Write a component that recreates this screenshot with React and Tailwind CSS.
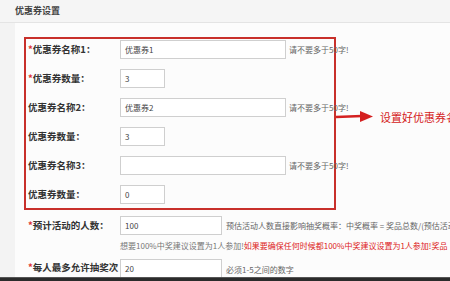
const font = { fontFamily: '"Noto Sans CJK SC", "Noto Sans", sans-serif' };

function Field({ label, required, value, width, hint }) {
  return (
    <div className="flex items-center h-[19px] whitespace-nowrap">
      <div className="w-[92px] shrink-0 text-[9.5px] font-bold text-[#333] leading-none">
        {required && <span className="text-[#d33]">*</span>}
        {label}
      </div>
      <div
        className={`${width} shrink-0 h-[19px] border border-[#cfcfcf] bg-white flex items-center pl-[4px] text-[8px] text-[#444]`}
      >
        {value}
      </div>
      {hint && <span className="ml-[3px] text-[8px] text-[#666]">{hint}</span>}
    </div>
  );
}

export default function App() {
  return (
    <div
      className="relative w-[450px] h-[281px] overflow-hidden bg-[#f3f3f3] flex flex-col"
      style={font}
    >
      <div className="h-[23px] shrink-0 pl-[15px] flex items-center text-[9px] font-bold text-[#444] border-b border-[#e4e4e4] bg-[#f5f5f5]">
        优惠券设置
      </div>

      <div className="flex-1 pl-[15px] flex">
        <div className="flex-1 bg-[#fcfcfc] pt-[14px]">
          <div className="ml-[9px] w-[312px] border-2 border-[#c8302b] pt-[1px] pb-[4px] pl-[2px] flex flex-col gap-[10px]">
            <Field required label="优惠券名称1：" value="优惠券1" width="w-[166px]" hint="请不要多于50字!" />
            <Field required label="优惠券数量：" value="3" width="w-[45px]" />
            <Field label="优惠券名称2：" value="优惠券2" width="w-[166px]" hint="请不要多于50字!" />
            <Field label="优惠券数量：" value="3" width="w-[45px]" />
            <Field label="优惠券名称3：" value="" width="w-[166px]" hint="请不要多于50字!" />
            <Field label="优惠券数量：" value="0" width="w-[45px]" />
          </div>

          <div className="pl-[13px] mt-[6px]">
            <div className="flex items-center h-[19px] whitespace-nowrap">
              <div className="w-[92px] shrink-0 text-[9.5px] font-bold text-[#333] leading-none">
                <span className="text-[#d33]">*</span>预计活动的人数：
              </div>
              <div className="w-[102px] shrink-0 h-[19px] border border-[#cfcfcf] bg-white flex items-center pl-[4px] text-[8px] text-[#444]">
                100
              </div>
              <span className="ml-[4px] text-[8px] text-[#666]">
                预估活动人数直接影响抽奖概率：中奖概率 = 奖品总数/(预估活动
              </span>
            </div>
            <div className="pl-[92px] mt-[5px] text-[8px] whitespace-nowrap text-[#777]">
              想要100%中奖建议设置为1人参加!
              <span className="text-[#d22]">如果要确保任何时候都100%中奖建议设置为1人参加!奖品</span>
            </div>
            <div className="flex items-start mt-[7px] whitespace-nowrap">
              <div className="w-[92px] shrink-0 text-[9.5px] font-bold text-[#333] leading-[14px] whitespace-normal pt-[1px]">
                <span className="text-[#d33]">*</span>每人最多允许抽奖次数：
              </div>
              <div className="w-[102px] shrink-0 h-[19px] border border-[#cfcfcf] bg-white flex items-center pl-[4px] text-[8px] text-[#444]">
                20
              </div>
              <span className="ml-[4px] mt-[5px] text-[8px] text-[#666]">必须1-5之间的数字</span>
            </div>
          </div>
        </div>
      </div>

      <div className="absolute left-0 right-0 bottom-0 h-[4px] bg-[#2b2b2b] border-t border-[#555]" />

      <div className="absolute left-[336px] top-[109px] flex items-center">
        <svg width="38" height="14" viewBox="0 0 38 14">
          <path d="M0 7 L26 6" stroke="#d42020" strokeWidth="2.5" fill="none" />
          <path d="M24 1 L37 6.5 L24 12 Z" fill="#d42020" />
        </svg>
        <span className="ml-[6px] text-[11px] text-[#d42020] whitespace-nowrap">设置好优惠券名</span>
      </div>
    </div>
  );
}
